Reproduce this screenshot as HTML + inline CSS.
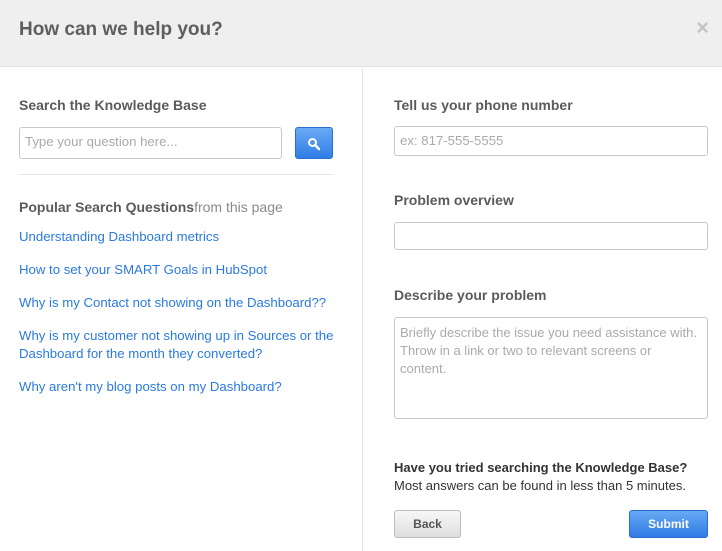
<!DOCTYPE html>
<html><head><style>
*{margin:0;padding:0;box-sizing:border-box}
body{width:722px;height:551px;overflow:hidden;background:#fff;font-family:"Liberation Sans",sans-serif;position:relative}
.hdr{position:absolute;left:0;top:0;width:722px;height:67px;background:#efefef;border-bottom:1px solid #e2e2e2}
.hdr h1{position:absolute;left:19px;top:19px;font-size:19px;color:#5e5e5e;font-weight:bold}
.x{position:absolute;right:13px;top:15px;font-size:22px;color:#c4c4c4;font-weight:bold}
.div{position:absolute;left:362px;top:68px;width:1px;height:483px;background:#e3e3e3}
.a{position:absolute;white-space:nowrap}
.lbl{font-size:14px;font-weight:bold;color:#5b5b5b}
.inp{position:absolute;border:1px solid #c8c8c8;border-radius:3px;background:#fff;font-size:13.2px;color:#aaa;padding:6px 5px;white-space:nowrap;overflow:hidden}
.lnk{font-size:13.2px;color:#2a7ae2;line-height:18px}
.btn{position:absolute;border-radius:3px;font-size:12px;font-weight:bold;text-align:center;line-height:26px}
</style></head><body>
<div class="hdr"><h1>How can we help you?</h1><div class="x">×</div></div>
<div class="div"></div>
<div class="a lbl" style="left:19px;top:97px">Search the Knowledge Base</div>
<div class="inp" style="left:19px;top:127px;width:263px;height:32px">Type your question here...</div>
<div class="btn" style="left:295px;top:127px;width:38px;height:32px;background:linear-gradient(#6aaaf5,#2f7de6);border:1px solid #2a6fd0">
<svg width="14" height="14" viewBox="0 0 14 14" style="margin-top:9px"><circle cx="5.5" cy="5.5" r="3.5" fill="none" stroke="#fff" stroke-width="2"/><path d="M8 8l4 4" stroke="#fff" stroke-width="2.5" stroke-linecap="round"/></svg></div>
<div class="a" style="left:19px;top:174px;width:314px;height:1px;background:#e6e6e6"></div>
<div class="a lbl" style="left:19px;top:199px">Popular Search Questions<span style="font-weight:normal;color:#8a8a8a">from this page</span></div>
<div class="a lnk" style="left:19px;top:228px">Understanding Dashboard metrics</div>
<div class="a lnk" style="left:19px;top:261px">How to set your SMART Goals in HubSpot</div>
<div class="a lnk" style="left:19px;top:294px">Why is my Contact not showing on the Dashboard??</div>
<div class="a lnk" style="left:19px;top:327px">Why is my customer not showing up in Sources or the<br>Dashboard for the month they converted?</div>
<div class="a lnk" style="left:19px;top:378px">Why aren't my blog posts on my Dashboard?</div>
<div class="a lbl" style="left:394px;top:97px">Tell us your phone number</div>
<div class="inp" style="left:394px;top:126px;width:314px;height:30px">ex: 817-555-5555</div>
<div class="a lbl" style="left:394px;top:192px">Problem overview</div>
<div class="inp" style="left:394px;top:222px;width:314px;height:28px"></div>
<div class="a lbl" style="left:394px;top:287px">Describe your problem</div>
<div class="inp" style="left:394px;top:317px;width:314px;height:102px;line-height:18px;font-size:13px">Briefly describe the issue you need assistance with.<br>Throw in a link or two to relevant screens or<br>content.</div>
<div class="a" style="left:394px;top:460px;font-size:13px;font-weight:bold;color:#333">Have you tried searching the Knowledge Base?</div>
<div class="a" style="left:394px;top:478px;font-size:13px;color:#333">Most answers can be found in less than 5 minutes.</div>
<div class="btn" style="left:394px;top:510px;width:67px;height:28px;background:linear-gradient(#f7f7f7,#dedede);border:1px solid #bdbdbd;color:#555">Back</div>
<div class="btn" style="left:629px;top:510px;width:79px;height:28px;background:linear-gradient(#67a9f5,#2f7be4);border:1px solid #2a6fd0;color:#fff">Submit</div>
</body></html>
